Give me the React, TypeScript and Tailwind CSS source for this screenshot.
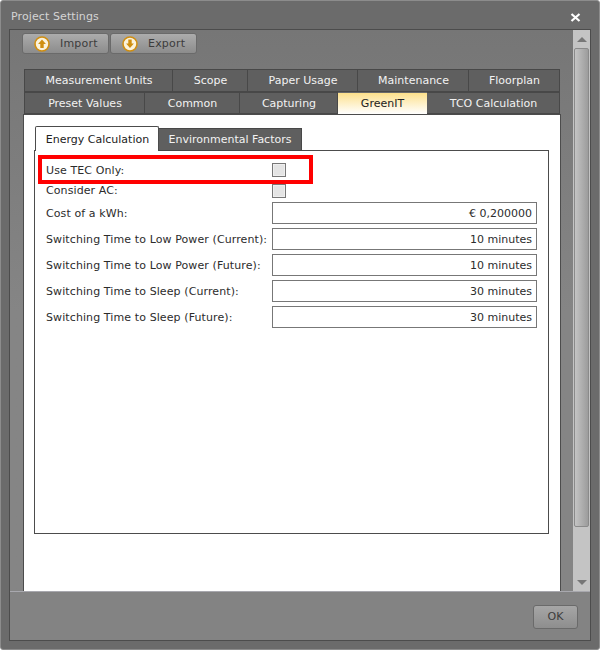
import React from "react";

const row1 = [["Measurement Units", 149], ["Scope", 75], ["Paper Usage", 110], ["Maintenance", 111], ["Floorplan", 91]] as const;
const row2 = [["Preset Values", 121], ["Common", 95], ["Capturing", 98], ["GreenIT", 89], ["TCO Calculation", 133]] as const;
const fields = [
  ["Cost of a kWh:", "€ 0,200000"],
  ["Switching Time to Low Power (Current):", "10 minutes"],
  ["Switching Time to Low Power (Future):", "10 minutes"],
  ["Switching Time to Sleep (Current):", "30 minutes"],
  ["Switching Time to Sleep (Future):", "30 minutes"],
];

function Tab({ label, width, active, h }: { label: string; width: number; active?: boolean; h: string }) {
  return (
    <div
      style={{ width }}
      className={
        active
          ? `${h} flex items-center justify-center pt-[2px] bg-gradient-to-b from-[#fde08a] to-[#ffffff] text-[#222222] border-t border-[#6a6a6a]`
          : `${h} flex items-center justify-center pt-[2px] pl-[1px] bg-[#5f5f5f] text-[#f2f2f2] border border-l-0 first:border-l border-[#484848]`
      }
    >
      {label}
    </div>
  );
}

function Circle({ down }: { down?: boolean }) {
  return (
    <svg width="16" height="16" viewBox="0 0 16 16" className="shrink-0">
      <circle cx="8" cy="8" r="7" fill="#fbf3dc" stroke="#cf8e12" strokeWidth="1.6" />
      <path
        d={down ? "M6.3 3.5h3.4v4h2.2L8 12 4.1 7.5h2.2z" : "M8 3.5l3.9 4.5H9.7v4H6.3V8H4.1z"}
        fill="#d08f10"
      />
    </svg>
  );
}

function ToolButton({ label, down, w }: { label: string; down?: boolean; w: string }) {
  return (
    <div className={`${w} h-[21px] flex items-center pl-[11px] gap-[10px] rounded-[3px] border border-[#6a6a6a] bg-gradient-to-b from-[#acacac] to-[#8c8c8c] text-[#3c3c3c]`}>
      <Circle down={down} />
      <span className="pt-[2px] tracking-[0.2px]">{label}</span>
    </div>
  );
}

export default function App() {
  return (
    <div className="w-[600px] h-[650px] bg-[#6b6b6b] border border-[#8c8c8c] rounded-[3px] flex flex-col text-[11px] font-['DejaVu_Sans','Liberation_Sans',sans-serif]">
      <div className="h-[28px] shrink-0 flex items-center justify-between pl-[10px] pr-[18px] pt-[5px] text-[#d4d4d4] tracking-[0.1px]">
        <span>Project Settings</span>
        <svg width="11" height="9" viewBox="0 0 11 9">
          <path d="M1.5 1l8 7M9.5 1l-8 7" stroke="#ffffff" strokeWidth="2.2" />
        </svg>
      </div>
      <div className="mx-[8px] h-[612px] border border-[#4c4c4c] flex flex-col bg-[#838383]">
        <div className="flex h-[561px] shrink-0">
          <div className="w-[563px] bg-gradient-to-b from-[#767676] via-[#858585] to-[#858585] flex flex-col">
            <div className="flex gap-px pl-[12px] pt-[3px] h-[39px] shrink-0">
              <ToolButton label="Import" w="w-[87px]" />
              <ToolButton label="Export" down w="w-[87px]" />
            </div>
            <div className="pl-[14px]">
              <div className="flex w-[536px]">
                {row1.map(([l, w]) => <Tab key={l} label={l} width={w} h="h-[23px]" />)}
              </div>
              <div className="flex w-[536px]">
                {row2.map(([l, w]) => <Tab key={l} label={l} width={w} active={l === "GreenIT"} h="h-[22px]" />)}
              </div>
            </div>
            <div className="ml-[13px] w-[538px] flex-1 bg-white border-l border-r border-t border-[#4c4c4c] relative pt-[11px] pl-[11px]">
              <div className="flex h-[25px]">
                <div className="w-[124px] h-[25px] pt-[2px] pl-[1px] bg-white border border-b-0 border-[#4c4c4c] rounded-t-[2px] flex items-center justify-center text-[#222222] relative z-10">Energy Calculation</div>
                <div className="w-[143px] mt-[2px] h-[23px] pt-[2px] bg-[#5f5f5f] border border-l-0 border-[#484848] text-[#f2f2f2] flex items-center justify-center">Environmental Factors</div>
              </div>
              <div className="-ml-px w-[515px] h-[384px] -mt-px border border-[#4c4c4c] pl-[11px] text-[#2c2c2c]">
                <div className="h-[21px] mt-[8px] flex items-center">
                  <span className="w-[226px] pt-[3px] tracking-[0.1px]">Use TEC Only:</span>
                  <span className="w-[14px] h-[14px] border border-[#777777] bg-[#e4e4e4] outline outline-1 -outline-offset-2 outline-[#efefef]" />
                </div>
                <div className="h-[21px] flex items-center">
                  <span className="w-[226px] pt-[2px] tracking-[0.1px]">Consider AC:</span>
                  <span className="w-[14px] h-[14px] border border-[#777777] bg-[#e4e4e4] outline outline-1 -outline-offset-2 outline-[#efefef]" />
                </div>
                <div className="flex flex-col gap-[4px] mt-[1px]">
                  {fields.map(([l, v]) => (
                    <div key={l} className="h-[22px] flex items-center">
                      <span className="w-[226px] whitespace-nowrap pt-[2px] tracking-[0.1px]">{l}</span>
                      <span className="w-[265px] h-[22px] pt-[2px] border border-[#777777] flex items-center justify-end pr-[4px]">{v}</span>
                    </div>
                  ))}
                </div>
              </div>
              <div className="absolute left-[14px] top-[40px] w-[275px] h-[29px] border-[4px] border-[#ff0000]" />
            </div>
          </div>
          <div className="w-[17px] bg-[#c4c4c4] flex flex-col items-center">
            <div className="h-[18px] flex items-center justify-center shrink-0">
              <div className="w-0 h-0 border-l-[5px] border-r-[5px] border-b-[5px] border-l-transparent border-r-transparent border-b-[#777777]" />
            </div>
            <div className="w-[15px] h-[479px] rounded-[2px] border border-[#8a8a8a] bg-gradient-to-r from-[#c4c4c4] to-[#9c9c9c]" />
            <div className="flex-1 flex items-end justify-center pb-[6px]">
              <div className="w-0 h-0 border-l-[5px] border-r-[5px] border-t-[5px] border-l-transparent border-r-transparent border-t-[#777777]" />
            </div>
          </div>
        </div>
        <div className="flex-1 border-t border-[#a8a8ae] flex justify-end pr-[12px] pt-[13px]">
          <div className="w-[45px] h-[24px] rounded-[3px] border border-[#6a6a6a] bg-gradient-to-b from-[#a6a6a6] to-[#8e8e8e] text-[#3c3c3c] flex items-center justify-center">OK</div>
        </div>
      </div>
    </div>
  );
}
